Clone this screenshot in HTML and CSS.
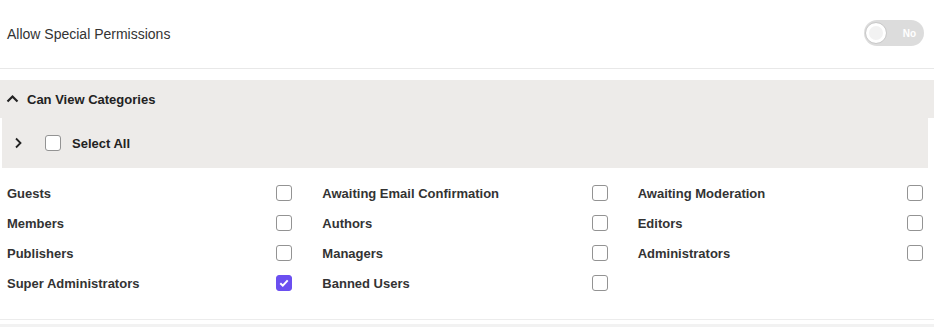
FILE: index.html
```html
<!DOCTYPE html>
<html>
<head>
<meta charset="utf-8">
<link rel="stylesheet" href="styles.css">
</head>
<body>
<div class="page">
  <div class="setting-row">
    <span class="setting-label">Allow Special Permissions</span>
    <div class="toggle">
      <span class="knob"></span>
      <span class="toggle-text">No</span>
    </div>
  </div>

  <div class="section">
    <div class="section-head">
      <svg class="chev-up" width="13" height="9" viewBox="0 0 13 9"><path d="M1.5 7.5 L6.5 2.5 L11.5 7.5" fill="none" stroke="#222" stroke-width="2.2"/></svg>
      <span class="section-title">Can View Categories</span>
    </div>
    <div class="select-all">
      <svg class="chev-right" width="8" height="12" viewBox="0 0 8 12"><path d="M2 1.5 L6.5 6 L2 10.5" fill="none" stroke="#222" stroke-width="1.8"/></svg>
      <span class="box"></span>
      <span class="sa-label">Select All</span>
    </div>
    <div class="grid">
      <div class="item"><span class="lbl">Guests</span><span class="box"></span></div>
      <div class="item"><span class="lbl">Awaiting Email Confirmation</span><span class="box"></span></div>
      <div class="item"><span class="lbl">Awaiting Moderation</span><span class="box"></span></div>
      <div class="item"><span class="lbl">Members</span><span class="box"></span></div>
      <div class="item"><span class="lbl">Authors</span><span class="box"></span></div>
      <div class="item"><span class="lbl">Editors</span><span class="box"></span></div>
      <div class="item"><span class="lbl">Publishers</span><span class="box"></span></div>
      <div class="item"><span class="lbl">Managers</span><span class="box"></span></div>
      <div class="item"><span class="lbl">Administrators</span><span class="box"></span></div>
      <div class="item"><span class="lbl">Super Administrators</span><span class="box checked"><svg width="10" height="8" viewBox="0 0 10 8"><path d="M1.3 4.2 L3.8 6.6 L8.7 1.4" fill="none" stroke="#fff" stroke-width="2"/></svg></span></div>
      <div class="item"><span class="lbl">Banned Users</span><span class="box"></span></div>
    </div>
  </div>
  <div class="next-section"></div>
</div>
</body>
</html>
```
FILE: styles.css
```css
* { box-sizing: border-box; }
html, body { margin: 0; padding: 0; background: #fff; }
body {
  font-family: "Liberation Sans", Arial, sans-serif;
  color: #333;
  width: 934px;
  height: 327px;
  overflow: hidden;
}
.setting-row {
  height: 69px;
  display: flex;
  align-items: center;
  justify-content: space-between;
  padding: 0 10px 0 7px;
  border-bottom: 1px solid #e8e8e8;
}
.setting-label {
  font-size: 14px;
  color: #333;
}
.toggle {
  width: 60px;
  height: 26px;
  border-radius: 13px;
  background: #dcdcdc;
  display: flex;
  align-items: center;
  justify-content: space-between;
  padding: 0 8px 0 1px;
  margin-top: -2px;
}
.knob {
  width: 22px;
  height: 22px;
  border-radius: 50%;
  background: #f2f2f2;
  border: 1px solid #c9c9c9;
  box-shadow: inset 0 0 0 3px #fff;
}
.toggle-text {
  font-size: 10px;
  font-weight: bold;
  color: #fff;
}
.section {
  margin-top: 11px;
  padding-bottom: 21px;
  border-bottom: 1px solid #ececec;
}
.section-head {
  height: 38px;
  background: #edebe9;
  display: flex;
  align-items: center;
  padding-left: 6px;
  gap: 8px;
}
.chev-up { margin-top: -2px; }
.section-title {
  font-size: 13px;
  font-weight: bold;
  color: #222;
}
.select-all {
  margin: 0 6px 0 2px;
  height: 50px;
  background: #edebe9;
  display: flex;
  align-items: center;
  padding-left: 12px;
}
.chev-right { margin-right: 23px; }
.sa-label {
  font-size: 13px;
  font-weight: bold;
  color: #222;
  margin-left: 11px;
}
.box {
  width: 16px;
  height: 16px;
  border: 1px solid #939393;
  border-radius: 3px;
  background: #fff;
  display: inline-flex;
  align-items: center;
  justify-content: center;
  flex: none;
}
.box.checked {
  background: #6b4ff0;
  border-color: #6b4ff0;
}
.grid {
  display: grid;
  grid-template-columns: repeat(3, 1fr);
  column-gap: 30px;
  padding: 10px 11px 0 7px;
}
.item {
  height: 30px;
  display: flex;
  align-items: center;
  justify-content: space-between;
}
.lbl {
  font-size: 13px;
  font-weight: bold;
  color: #333;
}
.next-section {
  margin-top: 4px;
  height: 10px;
  background: #f2f2f2;
}
```
